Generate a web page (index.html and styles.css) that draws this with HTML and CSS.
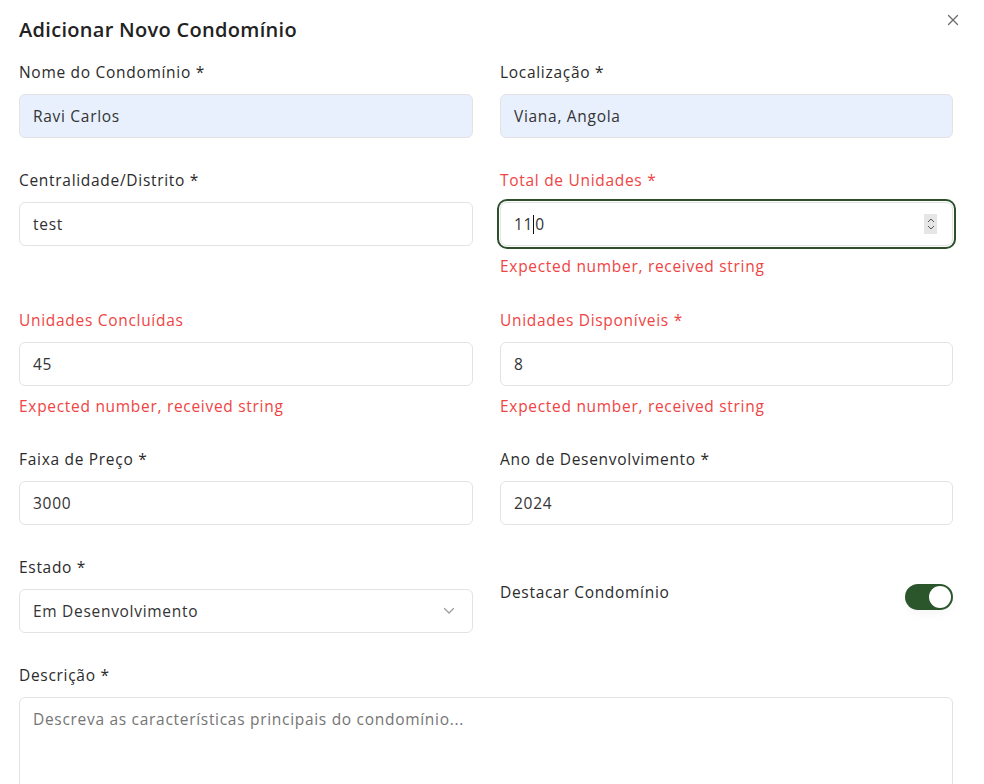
FILE: index.html
```html
<!DOCTYPE html>
<html lang="pt">
<head>
<meta charset="utf-8">
<title>Adicionar Novo Condomínio</title>
<link rel="stylesheet" href="styles.css">
</head>
<body>
<div class="dialog">
  <button class="close" aria-label="Fechar">
    <svg width="12" height="12" viewBox="0 0 12 12"><path d="M1.5 1.5L10.5 10.5M10.5 1.5L1.5 10.5" stroke="#6b6b6b" stroke-width="1.3" stroke-linecap="round"/></svg>
  </button>
  <h2 class="title">Adicionar Novo Condomínio</h2>
  <form class="grid">
    <div class="item">
      <label class="label">Nome do Condomínio *</label>
      <input class="input autofill" value="Ravi Carlos">
    </div>
    <div class="item">
      <label class="label">Localização *</label>
      <input class="input autofill" value="Viana, Angola">
    </div>

    <div class="item">
      <label class="label">Centralidade/Distrito *</label>
      <input class="input" value="test">
    </div>
    <div class="item">
      <label class="label error-label">Total de Unidades *</label>
      <div class="input focused">
        <span class="val">11<span class="caret"></span>0</span>
        <span class="spin">
          <svg width="12" height="20" viewBox="0 0 12 20"><path d="M3 8L6 5L9 8M3 12L6 15L9 12" stroke="#555" stroke-width="1" fill="none"/></svg>
        </span>
      </div>
      <p class="error">Expected number, received string</p>
    </div>

    <div class="item">
      <label class="label error-label">Unidades Concluídas</label>
      <input class="input" value="45">
      <p class="error">Expected number, received string</p>
    </div>
    <div class="item">
      <label class="label error-label">Unidades Disponíveis *</label>
      <input class="input" value="8">
      <p class="error">Expected number, received string</p>
    </div>

    <div class="item">
      <label class="label">Faixa de Preço *</label>
      <input class="input" value="3000">
    </div>
    <div class="item">
      <label class="label">Ano de Desenvolvimento *</label>
      <input class="input" value="2024">
    </div>

    <div class="item">
      <label class="label">Estado *</label>
      <div class="input select">
        <span>Em Desenvolvimento</span>
        <svg width="12" height="8" viewBox="0 0 12 8"><path d="M1.5 1.5L6 6L10.5 1.5" stroke="#9a9a9a" stroke-width="1.2" fill="none" stroke-linecap="round" stroke-linejoin="round"/></svg>
      </div>
    </div>
    <div class="item switch-item">
      <label class="label">Destacar Condomínio</label>
      <span class="switch"><span class="knob"></span></span>
    </div>

    <div class="item full">
      <label class="label">Descrição *</label>
      <textarea class="input textarea" placeholder="Descreva as características principais do condomínio..."></textarea>
    </div>
  </form>
</div>
</body>
</html>
```
FILE: styles.css
```css
* { box-sizing: border-box; }
html, body { margin: 0; background: #fff; }
body {
  font-family: "Open Sans", "Noto Sans", sans-serif;
  color: #2b2b2b;
  overflow: hidden;
  height: 784px;
}
.dialog {
  position: relative;
  padding: 16px 31px 0 19px;
}
.close {
  position: absolute;
  top: 14px;
  right: 25px;
  border: 0;
  background: none;
  padding: 0;
  width: 12px;
  height: 12px;
  display: flex;
}
.title {
  margin: 0;
  font-size: 20px;
  line-height: 28px;
  font-weight: 600;
  color: #222;
  letter-spacing: 0.3px;
}
.grid {
  margin-top: 17px;
  display: grid;
  grid-template-columns: 454px 453px;
  column-gap: 27px;
  row-gap: 31.25px;
  align-items: start;
}
.item { display: flex; flex-direction: column; }
.full { grid-column: 1 / -1; }
.label {
  font-size: 15.5px;
  line-height: 22px;
  font-weight: 500;
  letter-spacing: 0.7px;
  color: #2b2b2b;
  margin-bottom: 11px;
}
.error-label { color: #ef4444; }
.input {
  height: 44px;
  border: 1px solid #e3e3e3;
  border-radius: 6px;
  padding: 0 13px;
  font-family: inherit;
  font-size: 15.5px;
  letter-spacing: 0.7px;
  color: #333;
  background: #fff;
  outline: none;
  width: 100%;
}
.autofill { background: #e8f0fe; }
.focused {
  display: flex;
  align-items: center;
  justify-content: space-between;
  box-shadow: 0 0 0 1px #fff, 0 0 0 3px #2c4f2c;
  border-radius: 7px;
}
.val { display: inline-flex; align-items: center; }
.caret {
  display: inline-block;
  width: 1px;
  height: 19px;
  background: #111;
  margin-right: 1px;
}
.spin {
  display: flex;
  background: #e6e6e6;
  width: 13px;
  height: 20px;
  align-items: center;
  justify-content: center;
  margin-right: 2px;
}
.error {
  margin: 9px 0 0;
  font-size: 15.5px;
  letter-spacing: 0.7px;
  line-height: 22px;
  color: #ef4444;
  font-weight: 500;
}
.select {
  display: flex;
  align-items: center;
  justify-content: space-between;
  padding-right: 17px;
}
.switch-item {
  flex-direction: row;
  justify-content: space-between;
  align-items: flex-start;
  padding-top: 25px;
}
.switch-item .label { margin: 0; }
.switch {
  width: 48px;
  height: 26px;
  border-radius: 13px;
  background: #2b552b;
  position: relative;
  margin-top: 3px;
  box-shadow: 0 4px 10px rgba(0,0,0,0.04);
}
.knob {
  position: absolute;
  top: 2px;
  right: 2px;
  width: 22px;
  height: 22px;
  border-radius: 50%;
  background: #fff;
}
.textarea {
  height: 110px;
  padding: 10px 13px;
  resize: none;
  line-height: 22px;
}
.textarea::placeholder { color: #757575; }
```
